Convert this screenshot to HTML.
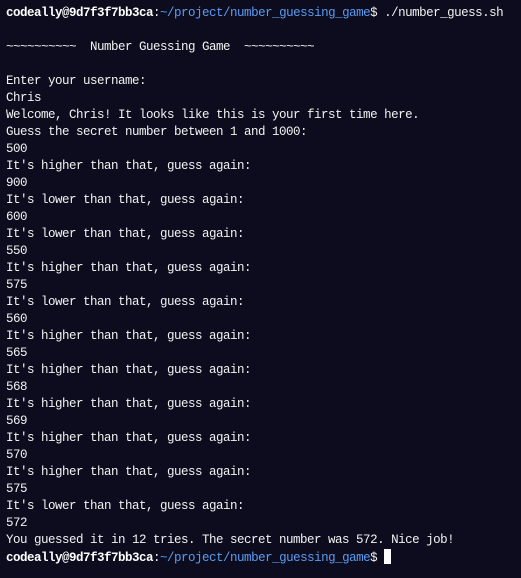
<!DOCTYPE html>
<html><head><meta charset="utf-8"><style>
html,body{margin:0;padding:0;background:#0c0c1e;width:521px;height:578px;overflow:hidden}
pre{margin:0;padding:5px 0 0 6px;font-family:"Liberation Mono",monospace;font-size:12.5px;line-height:17px;color:#f2f2f2;letter-spacing:-0.5px}
b{font-weight:bold;color:#fff}
.p{color:#5a9cf2}
.c{display:inline-block;width:7px;height:15px;background:#fff;vertical-align:-3px}
</style></head><body><pre><b>codeally@9d7f3f7bb3ca</b>:<span class="p">~/project/number_guessing_game</span>$ ./number_guess.sh

~~~~~~~~~~  Number Guessing Game  ~~~~~~~~~~

Enter your username:
Chris
Welcome, Chris! It looks like this is your first time here.
Guess the secret number between 1 and 1000:
500
It's higher than that, guess again:
900
It's lower than that, guess again:
600
It's lower than that, guess again:
550
It's higher than that, guess again:
575
It's lower than that, guess again:
560
It's higher than that, guess again:
565
It's higher than that, guess again:
568
It's higher than that, guess again:
569
It's higher than that, guess again:
570
It's higher than that, guess again:
575
It's lower than that, guess again:
572
You guessed it in 12 tries. The secret number was 572. Nice job!
<b>codeally@9d7f3f7bb3ca</b>:<span class="p">~/project/number_guessing_game</span>$ <span class="c"></span></pre></body></html>
